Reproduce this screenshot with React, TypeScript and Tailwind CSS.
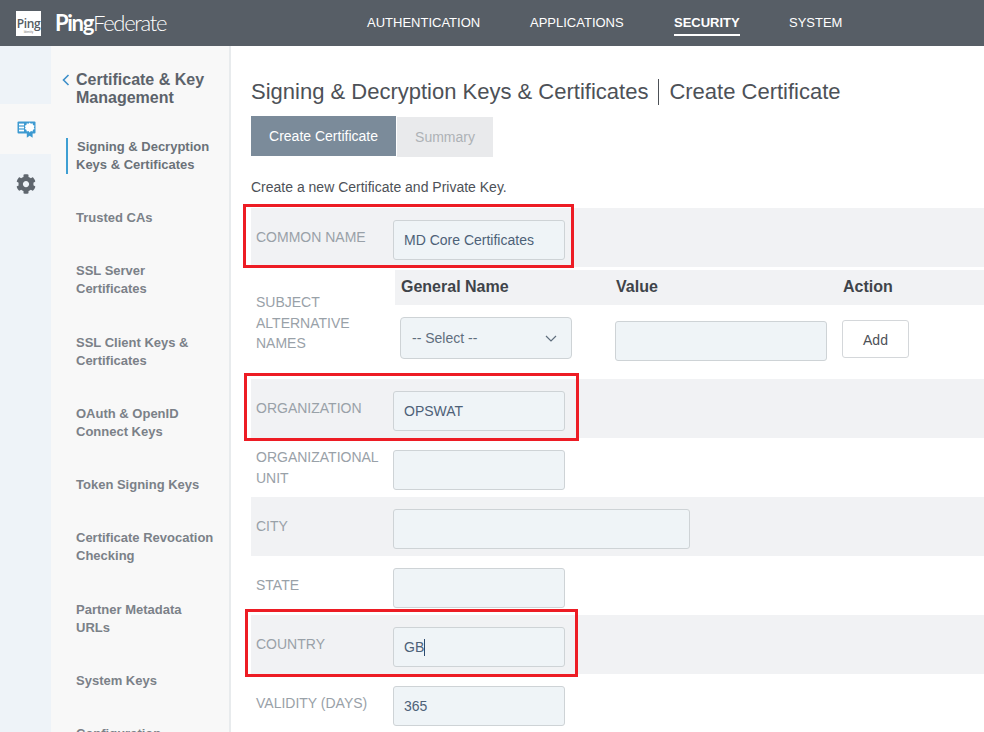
import React from "react";
import { FaCog } from "react-icons/fa";

const navItems: string[][] = [
  ["Trusted CAs"],
  ["SSL Server", "Certificates"],
  ["SSL Client Keys &", "Certificates"],
  ["OAuth & OpenID", "Connect Keys"],
  ["Token Signing Keys"],
  ["Certificate Revocation", "Checking"],
  ["Partner Metadata", "URLs"],
  ["System Keys"],
  ["Configuration"],
];

function CertIcon() {
  return (
    <svg width="19" height="17" viewBox="0 0 19 17" aria-hidden="true">
      <rect x="0.5" y="0.5" width="18" height="12" rx="1" fill="#3d9ad1" />
      <rect x="2" y="2.6" width="5" height="1.8" fill="#fff" />
      <rect x="2" y="5.6" width="5" height="1.8" fill="#fff" />
      <rect x="2" y="8.6" width="5" height="1.8" fill="#fff" />
      <path d="M9.8 11V16.8l2.9-2 2.9 2V11z" fill="#3d9ad1" />
      <path d="M12.7 1.4l1.2 1.3 1.7-.4.4 1.7 1.6.8-.8 1.6.8 1.6-1.6.8-.4 1.7-1.7-.4-1.2 1.3-1.2-1.3-1.7.4-.4-1.7-1.6-.8.8-1.6-.8-1.6 1.6-.8.4-1.7 1.7.4z" fill="#fff" />
    </svg>
  );
}

function Field({ value, wide, caret }: { value?: string; wide?: boolean; caret?: boolean }) {
  return (
    <div className={`mt-[12px] h-10 ${wide ? "w-[297px]" : "w-[172px]"} rounded-[3px] border border-[#ced3d6] bg-[#eff4f7] flex items-center pl-[10px] pt-[1px] text-[14px] text-[#4d6177]`}>
      {value}
      {caret && <span className="w-px h-[17px] bg-[#2c4a6e]" />}
    </div>
  );
}

function Row({ label, shaded, children }: { label: React.ReactNode; shaded?: boolean; children: React.ReactNode }) {
  return (
    <div className={`h-[59px] flex items-start ${shaded ? "bg-[#f1f2f4]" : ""}`}>
      <div className="w-[142px] self-center pl-[5px] text-[14px] leading-[21px] text-[#99a1a8]">{label}</div>
      {children}
    </div>
  );
}

function RedBox({ className }: { className: string }) {
  return <div className={`absolute border-[3px] border-[#ed1c24] ${className}`} />;
}

export default function App() {
  return (
    <div className="relative w-[984px] h-[732px] overflow-hidden bg-white font-['Liberation_Sans',Arial,sans-serif]">
      <header className="h-[46px] bg-[#575e66] flex items-center relative">
        <div className="ml-4 w-[25px] h-[25px] bg-white flex flex-col items-center justify-end pb-[2px]">
          <span className="text-[12px] leading-[13px] font-semibold tracking-[-0.4px] text-[#555c63] font-['Open_Sans',sans-serif]">Ping</span>
          <span className="text-[3px] leading-[4px] text-[#777]">Identity</span>
        </div>
        <div className="ml-[14px] w-[113px] text-[22px] tracking-[-1.3px] text-white font-['Lato',sans-serif] whitespace-nowrap -mt-[1px]">
          <span className="font-bold">Ping</span>
          <span className="font-light">Federate</span>
        </div>
        <nav className="ml-[199px] flex text-[13px] text-white -mt-[1px]">
          <span className="w-[163px]">AUTHENTICATION</span>
          <span className="w-[144px]">APPLICATIONS</span>
          <span className="w-[115px] relative">
            <span className="font-bold">SECURITY</span>
            <span className="absolute left-0 top-[21px] w-[66px] h-[2px] bg-white" />
          </span>
          <span>SYSTEM</span>
        </nav>
      </header>

      <div className="flex h-[686px]">
        <aside className="w-[51px] bg-[#eef3f8] pt-[58px] shrink-0">
          <div className="h-[50px] bg-[#f8f8f8] flex items-center justify-center pl-px">
            <CertIcon />
          </div>
          <div className="h-[60px] flex items-center justify-center">
            <FaCog className="w-5 h-5 text-[#5f666e]" />
          </div>
        </aside>

        <div className="w-[180px] shrink-0 bg-[#f8f8f8] border-r-2 border-[#e8ebed] overflow-hidden">
          <div className="flex pt-[25px] pl-[11px] text-[16px] leading-[18px] font-bold text-[#5c636b]">
            <svg width="8" height="12" viewBox="0 0 8 12" className="mt-[3px] mr-[6px]" fill="none" aria-hidden="true">
              <path d="M6.5 1L1.5 6l5 5" stroke="#3d8fc9" strokeWidth="1.6" />
            </svg>
            <div>Certificate &amp; Key<br />Management</div>
          </div>
          <div className="mt-[31px] ml-[15px] border-l-[2px] border-[#3f9fd3] pl-[8px] text-[13px] leading-[18px] font-bold text-[#6b7279]">
            <span className="ml-px">Signing &amp; Decryption</span><br />Keys &amp; Certificates
          </div>
          <div className="mt-[35px] pl-[25px] flex flex-col gap-[35.25px] text-[13px] leading-[18px] font-bold text-[#7b8188] whitespace-nowrap">
            {navItems.map((lines) => (
              <div key={lines[0]}>
                {lines.map((l) => (
                  <div key={l}>{l}</div>
                ))}
              </div>
            ))}
          </div>
        </div>

        <main className="flex-1 pl-5 pt-[32px] min-w-0">
          <h1 className="flex items-center text-[22px] leading-[28px] text-[#4d5157] whitespace-nowrap">
            <span>Signing &amp; Decryption Keys &amp; Certificates</span>
            <span className="w-px h-[26px] bg-[#4d5157] mx-[10px]" />
            <span>Create Certificate</span>
          </h1>
          <div className="mt-[10px] flex items-start">
            <div className="w-[145px] h-10 bg-[#7b8b9a] text-white text-[14px] flex items-center justify-center">Create Certificate</div>
            <div className="ml-px mt-px w-[96px] h-10 bg-[#e9eaec] text-[#aeb2b6] text-[14px] flex items-center justify-center">Summary</div>
          </div>
          <p className="mt-[20px] text-[14px] leading-[20px] text-[#4d5157]">Create a new Certificate and Private Key.</p>
          <div className="mt-[11px]">
            <Row label="COMMON NAME" shaded><Field value="MD Core Certificates" /></Row>
            <div className="h-[112px] flex">
              <div className="w-[144px] pl-[5px] pt-[25px] text-[14px] leading-[20.5px] text-[#99a1a8]">SUBJECT<br />ALTERNATIVE<br />NAMES</div>
              <div className="flex-1 pt-[3px]">
                <div className="h-[35px] bg-[#f1f2f4] flex items-center pb-[2px] text-[16px] font-bold text-[#3f444a]">
                  <span className="ml-[6px] w-[215px]">General Name</span>
                  <span className="w-[227px]">Value</span>
                  <span>Action</span>
                </div>
                <div className="flex items-start">
                  <div className="ml-[5px] mt-[12px] w-[172px] h-[42px] rounded-[4px] border border-[#ced3d6] bg-[#eff4f7] flex items-center justify-between pl-[11px] pr-[14px] text-[14px] text-[#5f6e7d]">
                    <span>-- Select --</span>
                    <svg width="12" height="7" viewBox="0 0 12 7" fill="none" aria-hidden="true">
                      <path d="M1 1l5 5 5-5" stroke="#5f6e7d" strokeWidth="1.2" />
                    </svg>
                  </div>
                  <div className="ml-[43px] mt-[16px] w-[212px] h-10 rounded-[3px] border border-[#ced3d6] bg-[#eff4f7]" />
                  <div className="ml-[15px] mt-[15px] w-[67px] h-[38px] rounded-[3px] border border-[#d4d7da] bg-white flex items-center justify-center pt-[2px] text-[14px] text-[#4d5157]">Add</div>
                </div>
              </div>
            </div>
            <Row label="ORGANIZATION" shaded><Field value="OPSWAT" /></Row>
            <Row label={<>ORGANIZATIONAL<br />UNIT</>}><Field /></Row>
            <Row label="CITY" shaded><Field wide /></Row>
            <Row label="STATE"><Field /></Row>
            <Row label="COUNTRY" shaded><Field value="GB" caret /></Row>
            <Row label="VALIDITY (DAYS)"><Field value="365" /></Row>
          </div>
        </main>
      </div>

      <RedBox className="left-[243px] top-[204px] w-[331px] h-[64px]" />
      <RedBox className="left-[244px] top-[373px] w-[335px] h-[68px]" />
      <RedBox className="left-[245px] top-[609px] w-[333px] h-[68px]" />
    </div>
  );
}
